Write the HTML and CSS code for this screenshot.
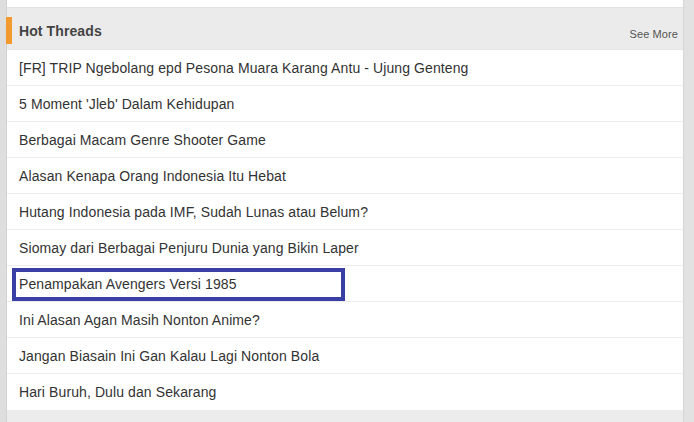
FILE: index.html
```html
<!DOCTYPE html>
<html>
<head>
<meta charset="utf-8">
<link rel="stylesheet" href="styles.css">
</head>
<body>
<div class="page">
  <div class="side left"></div>
  <div class="main">
    <div class="prev"></div>
    <div class="panel">
      <div class="header">
        <span class="accent"></span>
        <h2 class="title">Hot Threads</h2>
        <a class="more">See More</a>
      </div>
      <ul class="list">
        <li class="row">[FR] TRIP Ngebolang epd Pesona Muara Karang Antu - Ujung Genteng</li>
        <li class="row">5 Moment 'Jleb' Dalam Kehidupan</li>
        <li class="row">Berbagai Macam Genre Shooter Game</li>
        <li class="row">Alasan Kenapa Orang Indonesia Itu Hebat</li>
        <li class="row">Hutang Indonesia pada IMF, Sudah Lunas atau Belum?</li>
        <li class="row">Siomay dari Berbagai Penjuru Dunia yang Bikin Laper</li>
        <li class="row">Penampakan Avengers Versi 1985<span class="highlight"></span></li>
        <li class="row">Ini Alasan Agan Masih Nonton Anime?</li>
        <li class="row">Jangan Biasain Ini Gan Kalau Lagi Nonton Bola</li>
        <li class="row">Hari Buruh, Dulu dan Sekarang</li>
      </ul>
    </div>
    <div class="foot"></div>
  </div>
  <div class="side right"></div>
</div>
</body>
</html>
```
FILE: styles.css
```css
* { box-sizing: border-box; }
html, body { margin: 0; padding: 0; }
body {
  font-family: "Liberation Sans", Arial, sans-serif;
  background: #fff;
  width: 694px;
  height: 422px;
  overflow: hidden;
}
.page {
  display: flex;
  height: 422px;
}
.side.left {
  width: 7px;
  background: #dedede;
  border-right: 1px solid #d2d2d2;
}
.side.right {
  width: 11px;
  background: #e2e2e2;
  border-left: 1px solid #d6d6d6;
}
.main {
  flex: 1;
  display: flex;
  flex-direction: column;
}
.prev {
  height: 8px;
  background: #fff;
  border-bottom: 1px solid #e2e2e2;
}
.header {
  height: 42px;
  background: #ebebeb;
  display: flex;
  align-items: center;
  position: relative;
  border-bottom: 1px solid #e4e4e4;
}
.accent {
  position: absolute;
  left: -1px;
  top: 9px;
  width: 6px;
  height: 27px;
  background: #f29a2e;
}
.title {
  margin: 0 0 0 12px;
  font-size: 14px;
  font-weight: bold;
  color: #444;
  padding-top: 5px;
  letter-spacing: 0.1px;
}
.more {
  margin-left: auto;
  margin-right: 5px;
  font-size: 11px;
  color: #555;
  padding-top: 11px;
  letter-spacing: 0.1px;
}
.list {
  list-style: none;
  margin: 0;
  padding: 0;
}
.row {
  position: relative;
  height: 36px;
  display: flex;
  align-items: center;
  padding-left: 12px;
  font-size: 14px;
  color: #333;
  letter-spacing: 0.1px;
  background: #fff;
  border-bottom: 1px solid #ececec;
}
.row:last-child {
  height: 37px;
}
.highlight {
  position: absolute;
  left: 5px;
  top: 2px;
  width: 333px;
  height: 33px;
  border: 4px solid #3a3fa6;
}
.foot {
  flex: 1;
  background: #ececec;
}
```
